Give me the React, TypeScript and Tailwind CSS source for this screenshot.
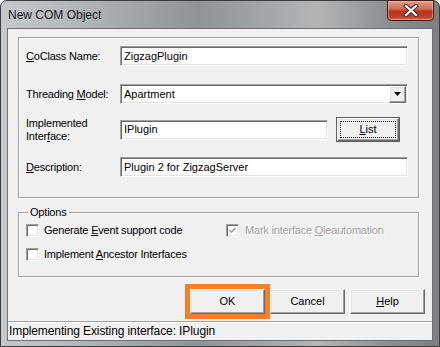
import React from "react";

// Classic Win32 "New COM Object" dialog inside a Windows 7 basic frame.
const sunken =
  "border border-t-[#a0a0a0] border-l-[#a0a0a0] border-b-white border-r-white shadow-[inset_1px_1px_0_#696969,inset_-1px_-1px_0_#e3e3e3] bg-white";
const raised =
  "border border-t-white border-l-white border-b-[#696969] border-r-[#696969] shadow-[inset_-1px_-1px_0_#a0a0a0,inset_1px_1px_0_#e3e3e3] bg-[#f0f0f0]";
const etched = "border border-[#a0a0a0] shadow-[1px_1px_0_#fff,inset_1px_1px_0_#fff]";

function Acc({ children }: { children: React.ReactNode }) {
  return <span className="underline underline-offset-[1px]">{children}</span>;
}

function Field({ value, width }: { value: string; width: string }) {
  return (
    <div className={`${sunken} ${width} flex h-[20px] items-center pl-[3px] text-[11px] tracking-normal text-black`}>
      {value}
    </div>
  );
}

function Check({ checked, disabled }: { checked?: boolean; disabled?: boolean }) {
  return (
    <div
      className={`${sunken} flex h-[13px] w-[13px] shrink-0 items-center justify-center ${disabled ? "bg-[#f0f0f0]" : "bg-white"}`}
    >
      {checked && (
        <svg width="7" height="7" viewBox="0 0 7 7">
          <path d="M0.5 3 L2.5 5 L6.5 1" fill="none" stroke={disabled ? "#a0a0a0" : "#000"} strokeWidth="1.6" />
        </svg>
      )}
    </div>
  );
}

function Button({ children }: { children: React.ReactNode }) {
  return (
    <div className={`${raised} flex h-[25px] w-[75px] items-center justify-center text-[11px] tracking-normal text-black`}>
      {children}
    </div>
  );
}

function CloseButton() {
  return (
    <div className="mr-[5px] -mt-px flex h-[21px] w-[47px] items-center justify-center rounded-b-[4px] border border-[#4a1810] bg-[linear-gradient(to_bottom,#e49a86_0%,#d0705a_40%,#b93419_55%,#c2422a_85%,#d86a48_100%)] shadow-[inset_0_0_0_1px_rgba(255,210,200,0.45)]">
      <svg width="16" height="13" viewBox="0 0 16 13">
        <path d="M3 2 L13 11 M13 2 L3 11" stroke="#3a2a28" strokeWidth="4.2" strokeLinecap="square" />
        <path d="M3 2 L13 11 M13 2 L3 11" stroke="#ffffff" strokeWidth="2.2" strokeLinecap="square" />
      </svg>
    </div>
  );
}

export default function App() {
  return (
    <div className="flex h-[347px] w-[440px] flex-col rounded-t-[7px] border border-[#3c3c3c] bg-[linear-gradient(to_right,#c6c9cc_0%,#b0b3b6_20%,#909396_45%,#a9abad_65%,#b5b5b5_72%,#8d8f91_88%,#7c7e80_100%)] font-['Liberation_Sans',Arial,sans-serif]">
      <div className="flex h-[28px] items-start justify-between">
        <span className="mt-[7px] ml-[7px] text-[12px] leading-[15px] text-[#1a1a1a]">New COM Object</span>
        <CloseButton />
      </div>

      <div className="mx-[6px] mb-[5px] flex w-[426px] flex-1 flex-col border border-[#6e7073] bg-[#f0f0f0] text-[11px] tracking-[-0.2px] text-black">
        {/* main fields group */}
        <div className={`${etched} mt-[8px] ml-[10px] flex h-[161px] w-[401px] flex-col pl-[7px] pt-[8px]`}>
          <div className="flex h-[20px] items-center">
            <span className="w-[94px]">
              <Acc>C</Acc>oClass Name:
            </span>
            <Field value="ZigzagPlugin" width="w-[288px]" />
          </div>

          <div className="mt-[18px] flex h-[20px] items-center">
            <span className="w-[94px]">
              Threading <Acc>M</Acc>odel:
            </span>
            <div className={`${sunken} flex h-[20px] w-[288px] items-center justify-between pl-[3px] pr-[1px] tracking-normal`}>
              <span>Apartment</span>
              <div className={`${raised} flex h-[17px] w-[17px] items-center justify-center`}>
                <svg width="7" height="4" viewBox="0 0 7 4">
                  <path d="M0 0 H7 L3.5 4 Z" fill="#000" />
                </svg>
              </div>
            </div>
          </div>

          <div className="mt-[13px] flex h-[25px] items-center">
            <span className="w-[94px] leading-[13px]">
              Implemented
              <br />
              Inter<Acc>f</Acc>ace:
            </span>
            <Field value="IPlugin" width="w-[208px]" />
            <div className="ml-[8px] flex h-[25px] w-[64px] border border-[#5e5e5e] p-0">
              <div className={`${raised} flex flex-1 items-center justify-center p-[2px] tracking-normal`}>
                <div className="flex h-full w-full items-center justify-center border border-dotted border-black">
                  <Acc>L</Acc>ist
                </div>
              </div>
            </div>
          </div>

          <div className="mt-[15px] flex h-[20px] items-center">
            <span className="w-[94px]">
              <Acc>D</Acc>escription:
            </span>
            <Field value="Plugin 2 for ZigzagServer" width="w-[288px]" />
          </div>
        </div>

        {/* options group */}
        <div className={`${etched} relative mt-[14px] ml-[10px] flex h-[65px] w-[401px] flex-col pl-[7px] pt-[11px]`}>
          <span className="absolute -top-[8px] left-[9px] bg-[#f0f0f0] px-[2px] leading-[14px]">Options</span>
          <div className="flex h-[13px] items-center">
            <div className="flex w-[200px] items-center gap-[5px]">
              <Check />
              <span>
                Generate <Acc>E</Acc>vent support code
              </span>
            </div>
            <div className="flex items-center gap-[6px]">
              <Check checked disabled />
              <span className="text-[#a0a0a0] [text-shadow:1px_1px_0_#fff]">
                Mark interface <Acc>O</Acc>leautomation
              </span>
            </div>
          </div>
          <div className="mt-[11px] flex h-[13px] items-center gap-[5px]">
            <Check />
            <span>
              Implement <Acc>A</Acc>ncestor Interfaces
            </span>
          </div>
        </div>

        {/* buttons */}
        <div className="mt-[12px] flex justify-end gap-[5px] pr-[7px]">
          <div className="relative">
            <Button>OK</Button>
            <div className="pointer-events-none absolute -inset-[5px] border-[5px] border-[#f6802a]" />
          </div>
          <Button>Cancel</Button>
          <Button>
            <Acc>H</Acc>elp
          </Button>
        </div>

        <div className="mt-[7px] h-px bg-[#a0a0a0]" />
        <div className="flex flex-1 items-center pl-[1px] text-[12px] tracking-[-0.1px] shadow-[inset_0_1px_0_#fff]">
          Implementing Existing interface: IPlugin
        </div>
      </div>
    </div>
  );
}
